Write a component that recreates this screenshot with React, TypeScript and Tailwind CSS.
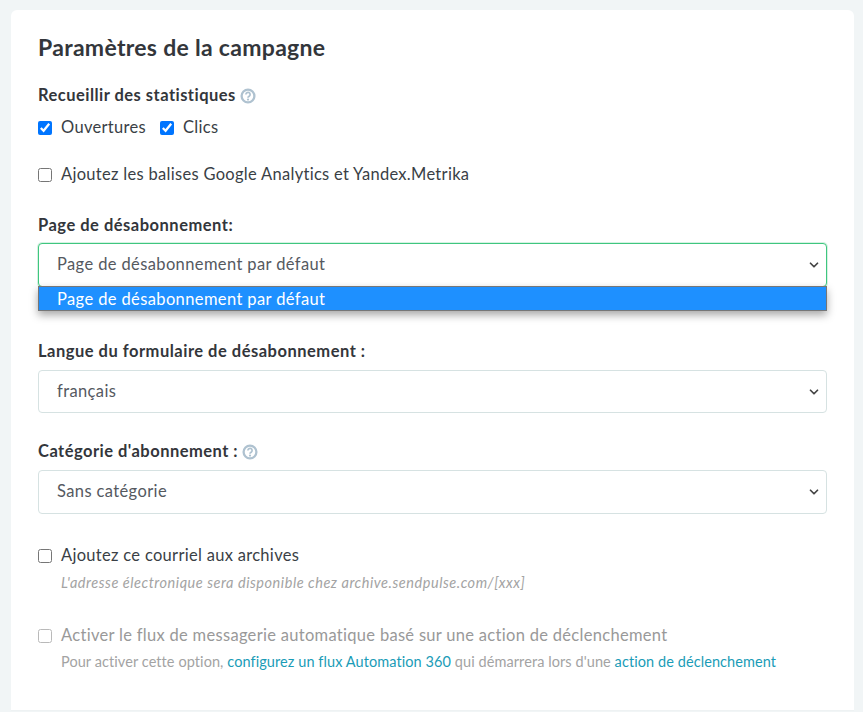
import { ChevronDown } from 'lucide-react';

const font = "font-['Lato','Noto_Sans',sans-serif]";

const Help = () => (
  <svg width="16" height="16" viewBox="0 0 16 16" fill="none" className="mt-px shrink-0">
    <circle cx="8" cy="8" r="6.4" stroke="#afc2d0" strokeWidth="2.3" />
    <path d="M5.9 6.5a2.1 2.1 0 1 1 3.3 1.7c-.7.5-1.2.8-1.2 1.6" stroke="#afc2d0" strokeWidth="1.7" fill="none" />
    <circle cx="8" cy="11.6" r="1.1" fill="#afc2d0" />
  </svg>
);

const Check = ({ checked, disabled, label, className }: { checked?: boolean; disabled?: boolean; label: string; className?: string }) => (
  <label className={`flex items-center gap-[9px] tracking-[0.3px] ${className ?? ''}`}>
    <input type="checkbox" readOnly checked={!!checked} className={`m-0 mt-px h-[14px] w-[14px] shrink-0 accent-[#0075ff] ${disabled ? 'opacity-50' : ''}`} />
    <span className={disabled ? 'text-[#999999]' : 'text-[#3a3f46]'}>{label}</span>
  </label>
);

const Select = ({ value, focused, height }: { value: string; focused?: boolean; height: string }) => (
  <div
    className={`flex items-center justify-between rounded-[4px] border bg-white pl-[18px] pr-[5px] text-[#55595f] ${height} ${
      focused ? 'border-[#3fc67f] shadow-[0_0_0_1px_#d5f2e2]' : 'border-[#d6e2e2]'
    }`}
  >
    <span className="-mt-[2px]">{value}</span>
    <ChevronDown size={14} strokeWidth={3} className="text-[#444]" />
  </div>
);

export default function App() {
  return (
    <div className={`h-[712px] overflow-hidden bg-[#f1f5f6] pl-[11px] pr-[9px] pt-[10px] text-[16.5px] leading-[22px] tracking-[0.38px] ${font}`}>
      <div className="h-[701px] rounded-t-[6px] border-b border-[#eef2f3] bg-white px-[27px] pt-[23px]">
        <h2 className="text-[23px] font-bold leading-[28px] tracking-[0.3px] text-[#33363b]">Paramètres de la campagne</h2>

        <div className="mt-[23px] flex h-[22px] items-center gap-[4px] font-bold tracking-[0.47px] text-[#33363b]">
          Recueillir des statistiques <Help />
        </div>
        <div className="mt-[10px] flex gap-[14px]">
          <Check checked label="Ouvertures" />
          <Check checked label="Clics" />
        </div>
        <Check className="mt-[25px]" label="Ajoutez les balises Google Analytics et Yandex.Metrika" />

        <div className="mt-[29px] font-bold tracking-[0.5px] text-[#33363b]">Page de désabonnement:</div>
        <div className="relative mt-[7px]">
          <Select value="Page de désabonnement par défaut" focused height="h-[44px]" />
          <div className="absolute left-0 right-0 top-[43px] z-10 h-[25px] border border-[#767676] bg-[#1e90ff] pl-[18px] leading-[24px] text-white shadow-[0_4px_8px_rgba(0,0,0,0.35)]">
            Page de désabonnement par défaut
          </div>
        </div>

        <div className="mt-[53px] font-bold tracking-[0.5px] text-[#33363b]">Langue du formulaire de désabonnement :</div>
        <div className="mt-[8px]">
          <Select value="français" height="h-[43px]" />
        </div>

        <div className="mt-[27px] flex h-[22px] items-center gap-[4px] font-bold tracking-[0.47px] text-[#33363b]">
          Catégorie d'abonnement : <Help />
        </div>
        <div className="mt-[8px]">
          <Select value="Sans catégorie" height="h-[44px]" />
        </div>

        <Check className="mt-[30px]" label="Ajoutez ce courriel aux archives" />
        <p className="ml-[23px] mt-[6px] text-[14.5px] italic leading-[22px] tracking-[0.53px] text-[#a3a3a3]">
          L'adresse électronique sera disponible chez archive.sendpulse.com/[xxx]
        </p>

        <Check disabled className="mt-[30px]" label="Activer le flux de messagerie automatique basé sur une action de déclenchement" />
        <p className="ml-[23px] mt-[5px] whitespace-nowrap text-[14.5px] leading-[22px] tracking-[0.08px] text-[#a3a3a3]">
          Pour activer cette option, <a className="text-[#1a9cb7]">configurez un flux Automation 360</a> qui démarrera lors d'une{' '}
          <a className="text-[#1a9cb7]">action de déclenchement</a>
        </p>
      </div>
    </div>
  );
}
